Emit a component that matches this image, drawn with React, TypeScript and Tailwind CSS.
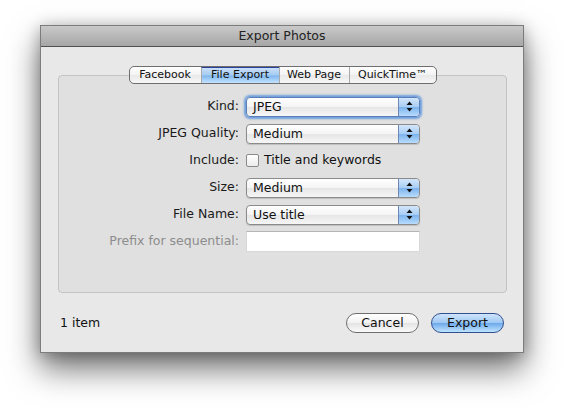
import { useState } from 'react'

const tabs = ['Facebook', 'File Export', 'Web Page', 'QuickTime™']
const tabWidths = ['w-[71px]', 'w-[78px]', 'w-[70px]', 'w-[87px]']

function Stepper() {
  return (
    <div className="w-[21px] h-full flex items-center justify-center border-l border-[#6d86b3] rounded-r-[4px] bg-[linear-gradient(#d3e6fb,#a9cdf4_48%,#7db3ee_52%,#b8dcfd)]">
      <svg width="7" height="11" viewBox="0 0 7 11">
        <path d="M3.5 0.5 L6.5 4 L0.5 4 Z" fill="#111" />
        <path d="M3.5 10.5 L6.5 7 L0.5 7 Z" fill="#111" />
      </svg>
    </div>
  )
}

function Popup({ value, focused }: { value: string; focused?: boolean }) {
  return (
    <div
      className={`w-[174px] h-[20px] flex items-stretch rounded-[4px] border bg-[linear-gradient(#ffffff,#f4f4f4_50%,#e6e6e6_52%,#f6f6f6)] ${
        focused
          ? 'border-[#5a7fb8] shadow-[0_0_2px_2px_rgba(84,142,220,0.8)]'
          : 'border-[#8a8a8a] shadow-[0_1px_1px_rgba(0,0,0,0.15)]'
      }`}
    >
      <span className="flex-1 pl-[6px] leading-[18px] text-[#111]">{value}</span>
      <Stepper />
    </div>
  )
}

function Row({ label, disabled, children }: { label: string; disabled?: boolean; children: React.ReactNode }) {
  return (
    <div className="h-[27px] flex items-center">
      <div className={`w-[187px] pr-[7px] text-right ${disabled ? 'text-[#8c8c8c]' : 'text-[#1a1a1a]'}`}>{label}</div>
      {children}
    </div>
  )
}

export default function App() {
  const [tab, setTab] = useState(1)
  const [includeTitle, setIncludeTitle] = useState(false)

  return (
    <div
      className="w-[564px] h-[408px] bg-white pl-[40px] pt-[25px] text-[12.5px]"
      style={{ fontFamily: '"DejaVu Sans", "Liberation Sans", sans-serif' }}
    >
      <div className="w-[484px] h-[328px] flex flex-col border border-[#7c7c7c] bg-[#e8e8e8] shadow-[0_16px_30px_rgba(0,0,0,0.55),0_2px_14px_rgba(0,0,0,0.25)]">
        {/* Title bar */}
        <div className="h-[21px] flex items-center justify-center border-b border-[#505050] bg-[linear-gradient(#c9c9c9,#a6a6a6)] text-[#222]">
          Export Photos
        </div>

        {/* Content */}
        <div className="flex-1 flex flex-col pt-[19px] pl-[17px] pr-[16px]">
          <div className="relative z-10 flex justify-center">
            <div className="flex h-[18px] rounded-[5px] border border-[#6f6f6f] bg-[linear-gradient(#ffffff,#f3f3f3_50%,#e9e9e9_52%,#f7f7f7)] overflow-hidden text-[11px]">
              {tabs.map((t, i) => (
                <button
                  key={t}
                  onClick={() => setTab(i)}
                  className={`${tabWidths[i]} flex items-center justify-center text-[#111] ${
                    i > 0 ? 'border-l border-[#a9a9a9]' : ''
                  } ${
                    tab === i
                      ? 'border-t border-t-[#2a3f9a] bg-[linear-gradient(#c9e0f8,#a4cbf2_48%,#80b6ee_52%,#c4e4ff)]'
                      : ''
                  }`}
                >
                  {t}
                </button>
              ))}
            </div>
          </div>

          <div className="-mt-[9px] h-[218px] rounded-[4px] border border-[#c4c4c4] bg-[#e0e0e0] pt-[17px]">
            <Row label="Kind:">
              <Popup value="JPEG" focused />
            </Row>
            <Row label="JPEG Quality:">
              <Popup value="Medium" />
            </Row>
            <Row label="Include:">
              <label className="flex items-center gap-[5px] text-[#111]">
                <input
                  type="checkbox"
                  checked={includeTitle}
                  onChange={e => setIncludeTitle(e.target.checked)}
                  className="appearance-none w-[13px] h-[13px] rounded-[2px] border border-[#8a8a8a] bg-[linear-gradient(#ffffff,#ececec)]"
                />
                Title and keywords
              </label>
            </Row>
            <Row label="Size:">
              <Popup value="Medium" />
            </Row>
            <Row label="File Name:">
              <Popup value="Use title" />
            </Row>
            <Row label="Prefix for sequential:" disabled>
              <div className="w-[174px] h-[21px] bg-white border border-[#d8d8d8] border-t-[#b5b5b5]" />
            </Row>
          </div>

          <div className="mt-[20px] h-[20px] flex items-center justify-between pl-[2px] pr-[3px]">
            <span className="text-[#111]">1 item</span>
            <div className="flex gap-[12px]">
              <button className="w-[73px] h-[20px] rounded-full border border-[#6e6e6e] bg-[linear-gradient(#ffffff,#f2f2f2_50%,#e4e4e4_52%,#fafafa)] text-[#111] leading-[18px]">
                Cancel
              </button>
              <button className="w-[73px] h-[20px] rounded-full border border-[#2f4f8f] bg-[linear-gradient(#cfe4fb,#9fc8f3_48%,#6eaaeb_52%,#bfe4ff)] text-[#111] leading-[18px]">
                Export
              </button>
            </div>
          </div>
        </div>
      </div>
    </div>
  )
}
